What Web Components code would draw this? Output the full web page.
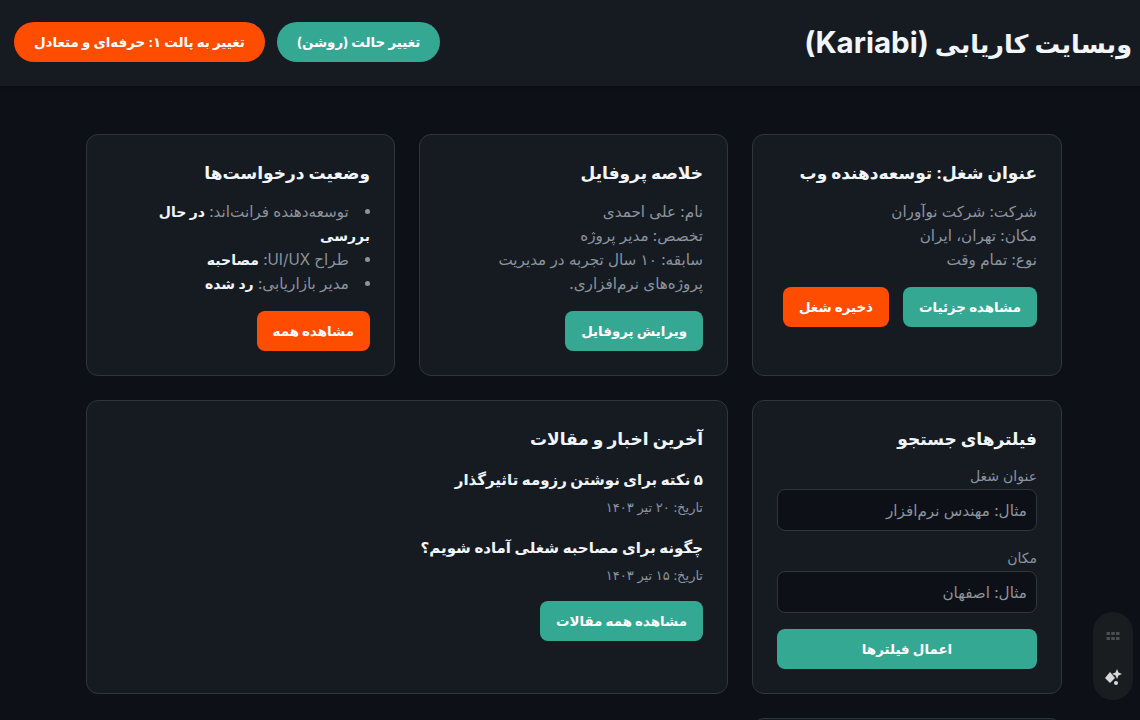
<!DOCTYPE html>
<html lang="fa" dir="rtl">
<head>
<meta charset="utf-8">
<title>Kariabi</title>
<style>
    html, body { margin: 0; height: 720px; overflow: hidden; background: #0d1117; }
    body { color: #f0f6fc; font-family: "Inter", "Noto Sans", "DejaVu Sans", sans-serif; font-size: 15.2px; line-height: 24px; }
</style>
</head>
<body>
<site-header></site-header>
<page-grid>
    <info-card heading="عنوان شغل: توسعه‌دهنده وب">
        <div>شرکت: شرکت نوآوران</div>
        <div>مکان: تهران، ایران</div>
        <div>نوع: تمام وقت</div>
        <div slot="actions"><action-button>مشاهده جزئیات</action-button><action-button tone="accent">ذخیره شغل</action-button></div>
    </info-card>
    <info-card heading="خلاصه پروفایل">
        <div>نام: علی احمدی</div>
        <div>تخصص: مدیر پروژه</div>
        <div>سابقه: ۱۰ سال تجربه در مدیریت پروژه‌های نرم‌افزاری.</div>
        <div slot="actions"><action-button>ویرایش پروفایل</action-button></div>
    </info-card>
    <info-card heading="وضعیت درخواست‌ها">
        <status-list>
            <li>توسعه‌دهنده فرانت‌اند: <strong>در حال<br>بررسی</strong></li>
            <li>طراح UI/UX: <strong>مصاحبه</strong></li>
            <li>مدیر بازاریابی: <strong>رد شده</strong></li>
        </status-list>
        <div slot="actions"><action-button tone="accent">مشاهده همه</action-button></div>
    </info-card>
    <info-card heading="فیلترهای جستجو">
        <filter-field label="عنوان شغل" placeholder="مثال: مهندس نرم‌افزار"></filter-field>
        <filter-field label="مکان" placeholder="مثال: اصفهان"></filter-field>
        <div slot="actions"><action-button wide>اعمال فیلترها</action-button></div>
    </info-card>
    <info-card heading="آخرین اخبار و مقالات" span="2">
        <news-item title="۵ نکته برای نوشتن رزومه تاثیرگذار" date="تاریخ: ۲۰ تیر ۱۴۰۳"></news-item>
        <news-item title="چگونه برای مصاحبه شغلی آماده شویم؟" date="تاریخ: ۱۵ تیر ۱۴۰۳"></news-item>
        <div slot="actions"><action-button>مشاهده همه مقالات</action-button></div>
    </info-card>
    <info-card></info-card>
</page-grid>
<floating-dock></floating-dock>

<script>
class SiteHeader extends HTMLElement {
    constructor() {
        super();
        this.attachShadow({ mode: 'open' });
        this.shadowRoot.innerHTML = `
            <style>
                :host {
                    display: flex;
                    align-items: center;
                    justify-content: space-between;
                    height: 86px;
                    box-sizing: border-box;
                    padding: 0 8px 0 14px;
                    background: #161b22;
                    box-shadow: 0 2px 4px rgba(0, 0, 0, 0.3);
                }
                h1 { margin: 0; font-size: 25.5px; letter-spacing: -0.9px; line-height: 40px; font-weight: 700; color: #f0f6fc; }
                h1 bdi { font-size: 29.5px; letter-spacing: 0; }
                .buttons { display: flex; gap: 12px; margin-bottom: 2px; }
            </style>
            <h1>وبسایت کاریابی <bdi>(Kariabi)</bdi></h1>
            <div class="buttons">
                <action-button pill>تغییر حالت (روشن)</action-button>
                <action-button pill tone="accent">تغییر به پالت ۱: حرفه‌ای و متعادل</action-button>
            </div>
        `;
    }
}

class PageGrid extends HTMLElement {
    constructor() {
        super();
        this.attachShadow({ mode: 'open' });
        this.shadowRoot.innerHTML = `
            <style>
                :host {
                    display: grid;
                    grid-template-columns: 310px 309px 309px;
                    gap: 24px;
                    padding: 48px 78px 0 86px;
                }
            </style>
            <slot></slot>
        `;
    }
}

class InfoCard extends HTMLElement {
    constructor() {
        super();
        this.attachShadow({ mode: 'open' });
        this.shadowRoot.innerHTML = `
            <style>
                :host {
                    display: block;
                    box-sizing: border-box;
                    padding: 24px;
                    background: #161b22;
                    border: 1px solid #30363d;
                    border-radius: 12px;
                    color: #8b949e;
                }
                :host([span="2"]) { grid-column: span 2; }
                h3 { margin: 0 0 14px; font-size: 17px; letter-spacing: -0.4px; line-height: 28px; height: 27px; font-weight: 700; color: #f0f6fc; }
                .actions { margin-top: 15px; }
                ::slotted([slot="actions"]) { display: flex; gap: 14px; }
            </style>
            <h3></h3>
            <slot></slot>
            <div class="actions"><slot name="actions"></slot></div>
        `;
    }

    connectedCallback() {
        this.shadowRoot.querySelector('h3').textContent = this.getAttribute('heading');
    }
}

class ActionButton extends HTMLElement {
    constructor() {
        super();
        this.attachShadow({ mode: 'open' });
        this.shadowRoot.innerHTML = `
            <style>
                :host {
                    display: inline-flex;
                    align-items: center;
                    justify-content: center;
                    height: 40px;
                    box-sizing: border-box;
                    padding: 0 16px;
                    border-radius: 8px;
                    background: #34a893;
                    color: #fff;
                    font-size: 13.4px;
                    letter-spacing: -0.3px;
                    font-weight: 700;
                    white-space: nowrap;
                }
                :host([tone="accent"]) { background: #ff4d00; }
                :host([pill]) { border-radius: 20px; padding: 0 20px; }
                :host([wide]) { flex: 1; }
            </style>
            <slot></slot>
        `;
    }
}

class StatusList extends HTMLElement {
    constructor() {
        super();
        this.attachShadow({ mode: 'open' });
        this.shadowRoot.innerHTML = `
            <style>
                :host { display: block; }
                ::slotted(li) { list-style-position: inside; }
            </style>
            <slot></slot>
        `;
    }

    connectedCallback() {
        this.querySelectorAll('strong').forEach((el) => {
            el.style.color = '#f0f6fc';
            el.style.fontSize = '14px';
            el.style.letterSpacing = '-0.2px';
        });
    }
}

class FilterField extends HTMLElement {
    constructor() {
        super();
        this.attachShadow({ mode: 'open' });
        this.shadowRoot.innerHTML = `
            <style>
                :host { display: block; margin-bottom: 17px; }
                :host(:last-of-type) { margin-bottom: 0; padding-bottom: 1px; }
                label { display: block; font-size: 14px; line-height: 20px; margin-bottom: 3px; }
                input {
                    display: block;
                    width: 100%;
                    height: 42px;
                    box-sizing: border-box;
                    padding: 0 9px;
                    background: #0d1117;
                    border: 1px solid #30363d;
                    border-radius: 8px;
                    color: #f0f6fc;
                    font: inherit;
                    font-size: 15.2px;
                    direction: rtl;
                }
                input::placeholder { color: #8b949e; opacity: 1; }
            </style>
            <label></label>
            <input type="text">
        `;
    }

    connectedCallback() {
        this.shadowRoot.querySelector('label').textContent = this.getAttribute('label');
        this.shadowRoot.querySelector('input').placeholder = this.getAttribute('placeholder');
    }
}

class NewsItem extends HTMLElement {
    constructor() {
        super();
        this.attachShadow({ mode: 'open' });
        this.shadowRoot.innerHTML = `
            <style>
                :host { display: block; margin-bottom: 16px; }
                :host(:last-of-type) { margin-bottom: 0; }
                h4 { margin: 0 0 3px; font-size: 15px; letter-spacing: -0.25px; line-height: 27px; font-weight: 700; color: #f0f6fc; }
                p { margin: 0; font-size: 13px; line-height: 22px; }
            </style>
            <h4></h4>
            <p></p>
        `;
    }

    connectedCallback() {
        this.shadowRoot.querySelector('h4').textContent = this.getAttribute('title');
        this.shadowRoot.querySelector('p').textContent = this.getAttribute('date');
    }
}

class FloatingDock extends HTMLElement {
    constructor() {
        super();
        this.attachShadow({ mode: 'open' });
        this.shadowRoot.innerHTML = `
            <style>
                :host {
                    position: fixed;
                    left: 1093px;
                    top: 612px;
                    width: 40px;
                    height: 88px;
                    border-radius: 20px;
                    background: #1a1d20;
                }
                svg { position: absolute; left: 0; top: 0; }
            </style>
            <svg width="40" height="88" viewBox="0 0 40 88">
                <g fill="#4a4d50">
                    <rect x="13.500" y="20" width="3.500" height="3"/><rect x="18.250" y="20" width="3.500" height="3"/><rect x="23" y="20" width="3.500" height="3"/>
                    <rect x="13.500" y="25" width="3.500" height="3"/><rect x="18.250" y="25" width="3.500" height="3"/><rect x="23" y="25" width="3.500" height="3"/>
                </g>
                <g fill="#d8d8d8">
                    <path d="M17 60l5 6-5 5-5-5z"/>
                    <path d="M24 57l1.500 3.500 3.500 1.500-3.500 1.500-1.500 3.500-1.500-3.500-3.500-1.500 3.500-1.500z"/>
                    <circle cx="23" cy="71" r="2"/>
                </g>
            </svg>
        `;
    }
}

window.customElements.define('action-button', ActionButton);
window.customElements.define('site-header', SiteHeader);
window.customElements.define('page-grid', PageGrid);
window.customElements.define('info-card', InfoCard);
window.customElements.define('status-list', StatusList);
window.customElements.define('filter-field', FilterField);
window.customElements.define('news-item', NewsItem);
window.customElements.define('floating-dock', FloatingDock);
</script>
</body>
</html>
